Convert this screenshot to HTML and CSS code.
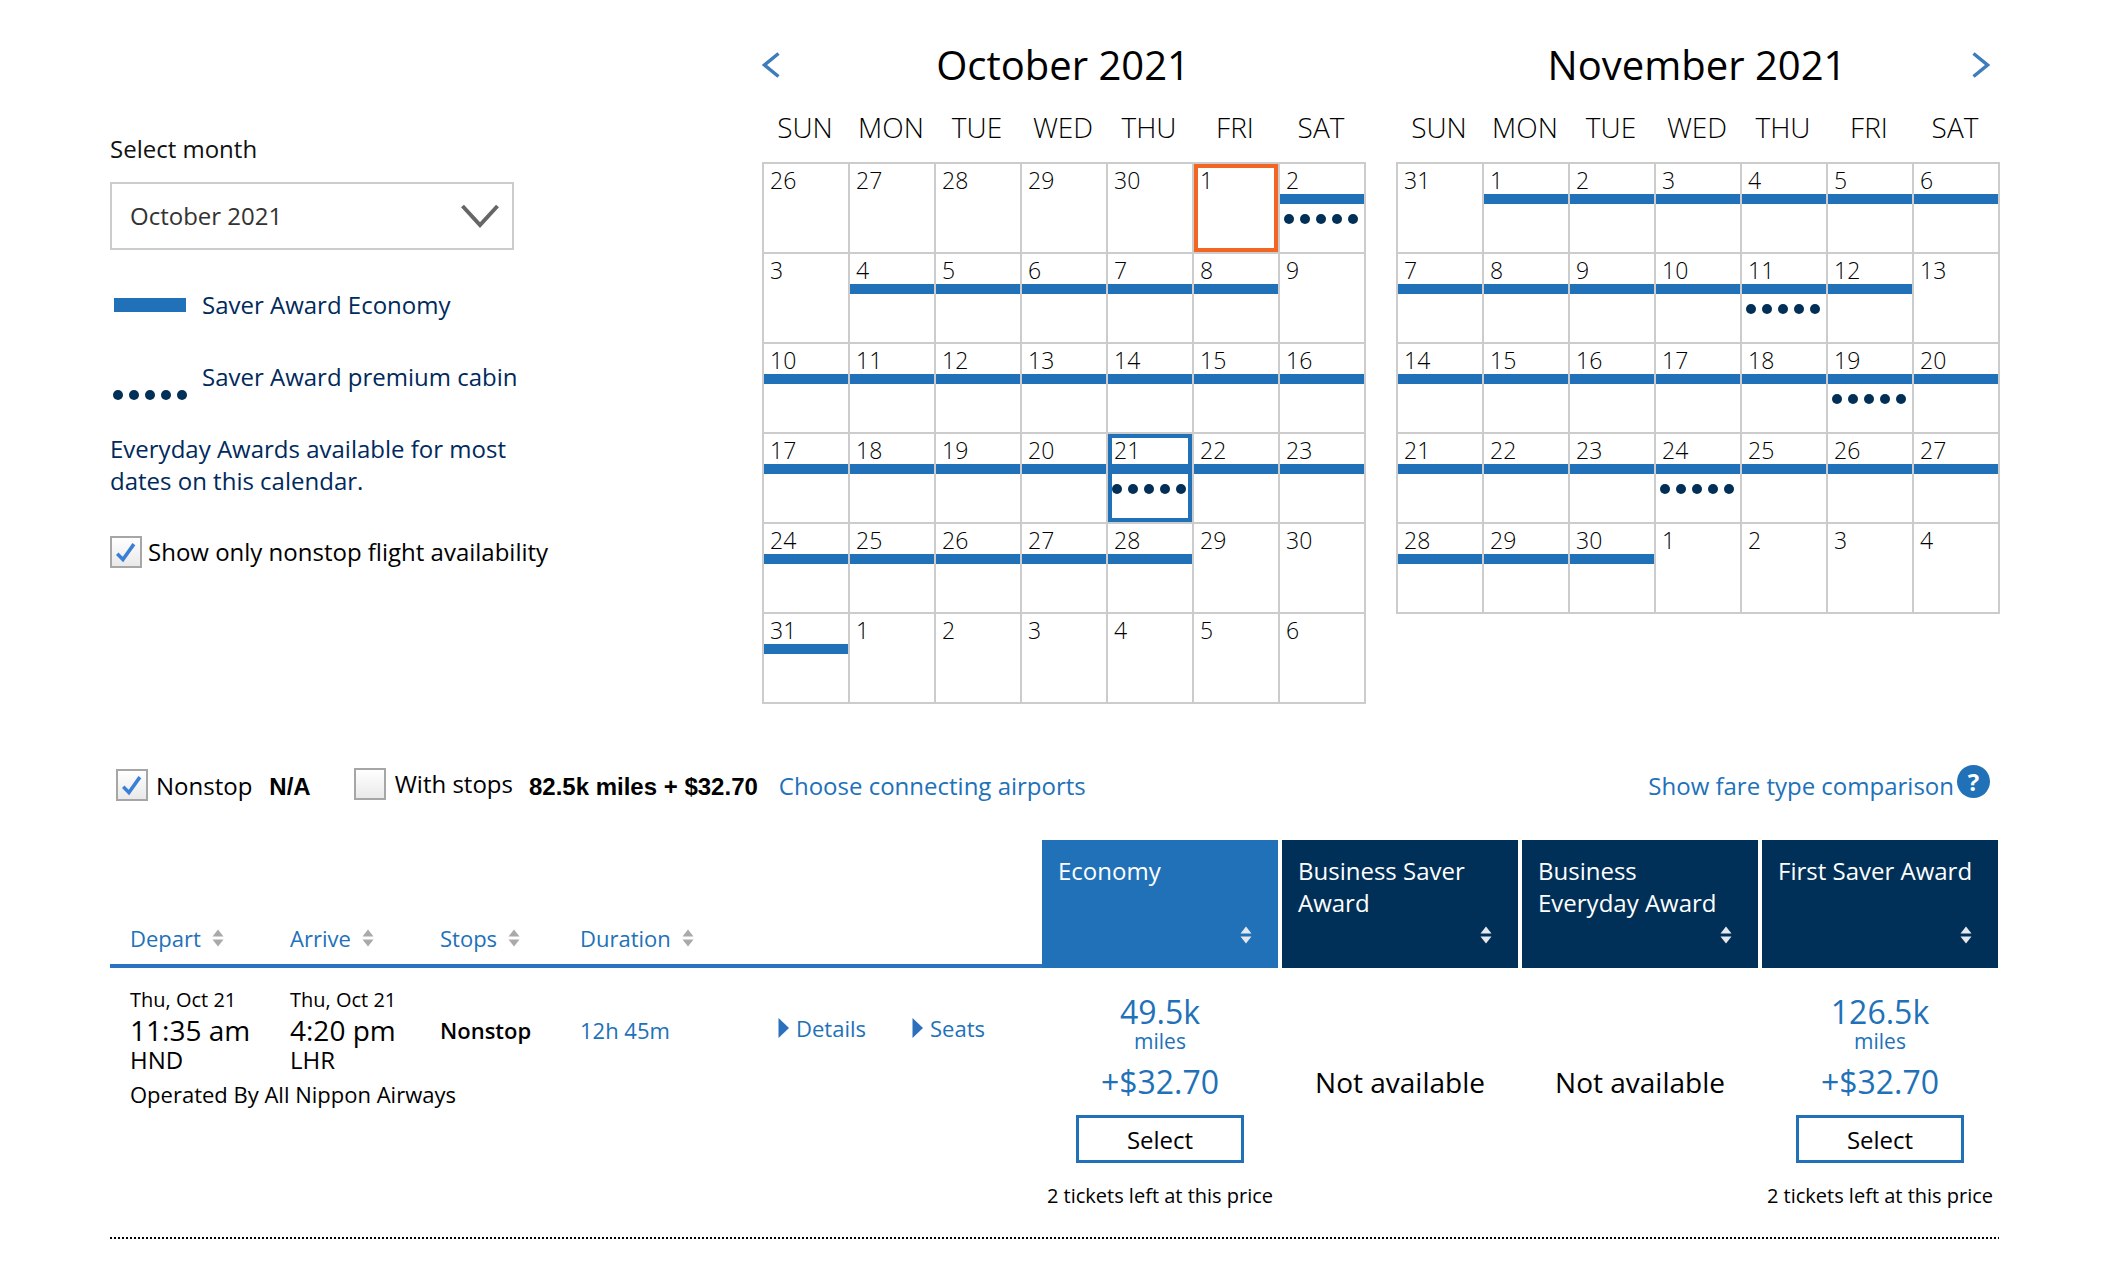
FILE: index.html
```html
<!DOCTYPE html>
<html lang="en">
<head>
<meta charset="utf-8">
<title>Award calendar</title>
<link rel="stylesheet" href="styles.css">
</head>
<body>
<svg class="defs" width="0" height="0" aria-hidden="true">
  <symbol id="sort" viewBox="0 0 12 18"><path d="M6 0.5 L11.5 7.5 H0.5 Z M0.5 10.5 H11.5 L6 17.5 Z" fill="currentColor"/></symbol>
  <symbol id="check" viewBox="0 0 32 32"><path d="M6 18 L12.5 24.5 L25 7" fill="none" stroke="#3a7fd5" stroke-width="4"/></symbol>
  <symbol id="tri" viewBox="0 0 11 20"><path d="M0.5 0 L11 10 L0.5 20 Z" fill="#2a70bd"/></symbol>
</svg>
<main class="page">
  <section class="top">
    <aside class="side">
      <label class="side-label">Select month</label>
      <div class="select"><span>October 2021</span>
        <svg class="select-arrow" width="38" height="24" viewBox="0 0 38 24"><path d="M1.5 2 L19 21 L36.5 2" fill="none" stroke="#666" stroke-width="4"/></svg>
      </div>
      <div class="legend legend-bar"><span class="legend-swatch"></span><span>Saver Award Economy</span></div>
      <div class="legend legend-prem"><span class="dots legend-dots"><i></i><i></i><i></i><i></i><i></i></span><span>Saver Award premium cabin</span></div>
      <p class="note">Everyday Awards available for most<br>dates on this calendar.</p>
      <div class="check-row"><span class="box"><svg width="28" height="28"><use href="#check"/></svg></span><span>Show only nonstop flight availability</span></div>
    </aside>
    <div class="cals" id="cals">
      <div class="cal">
        <div class="cal-head"><svg class="nav" width="18" height="26" viewBox="0 0 18 26"><path d="M16.5 1.5 L2.5 13 L16.5 24.5" fill="none" stroke="#3d7dbb" stroke-width="3.5"/></svg><h2>October 2021</h2><span class="nav-space"></span></div>
        <div class="weekdays"><span>SUN</span><span>MON</span><span>TUE</span><span>WED</span><span>THU</span><span>FRI</span><span>SAT</span></div>
        <div class="grid">
          <div class="day"><div class="num">26</div></div><div class="day"><div class="num">27</div></div><div class="day"><div class="num">28</div></div><div class="day"><div class="num">29</div></div><div class="day"><div class="num">30</div></div><div class="day today"><div class="num">1</div></div><div class="day"><div class="num">2</div><div class="bar"></div><div class="dots"><i></i><i></i><i></i><i></i><i></i></div></div>
          <div class="day"><div class="num">3</div></div><div class="day"><div class="num">4</div><div class="bar"></div></div><div class="day"><div class="num">5</div><div class="bar"></div></div><div class="day"><div class="num">6</div><div class="bar"></div></div><div class="day"><div class="num">7</div><div class="bar"></div></div><div class="day"><div class="num">8</div><div class="bar"></div></div><div class="day"><div class="num">9</div></div>
          <div class="day"><div class="num">10</div><div class="bar"></div></div><div class="day"><div class="num">11</div><div class="bar"></div></div><div class="day"><div class="num">12</div><div class="bar"></div></div><div class="day"><div class="num">13</div><div class="bar"></div></div><div class="day"><div class="num">14</div><div class="bar"></div></div><div class="day"><div class="num">15</div><div class="bar"></div></div><div class="day"><div class="num">16</div><div class="bar"></div></div>
          <div class="day"><div class="num">17</div><div class="bar"></div></div><div class="day"><div class="num">18</div><div class="bar"></div></div><div class="day"><div class="num">19</div><div class="bar"></div></div><div class="day"><div class="num">20</div><div class="bar"></div></div><div class="day selected"><div class="num">21</div><div class="bar"></div><div class="dots"><i></i><i></i><i></i><i></i><i></i></div></div><div class="day"><div class="num">22</div><div class="bar"></div></div><div class="day"><div class="num">23</div><div class="bar"></div></div>
          <div class="day"><div class="num">24</div><div class="bar"></div></div><div class="day"><div class="num">25</div><div class="bar"></div></div><div class="day"><div class="num">26</div><div class="bar"></div></div><div class="day"><div class="num">27</div><div class="bar"></div></div><div class="day"><div class="num">28</div><div class="bar"></div></div><div class="day"><div class="num">29</div></div><div class="day"><div class="num">30</div></div>
          <div class="day"><div class="num">31</div><div class="bar"></div></div><div class="day"><div class="num">1</div></div><div class="day"><div class="num">2</div></div><div class="day"><div class="num">3</div></div><div class="day"><div class="num">4</div></div><div class="day"><div class="num">5</div></div><div class="day"><div class="num">6</div></div>
        </div>
      </div>
      <div class="cal">
        <div class="cal-head"><span class="nav-space"></span><h2>November 2021</h2><svg class="nav nav-next" width="18" height="26" viewBox="0 0 18 26"><path d="M1.5 1.5 L15.5 13 L1.5 24.5" fill="none" stroke="#3d7dbb" stroke-width="3.5"/></svg></div>
        <div class="weekdays"><span>SUN</span><span>MON</span><span>TUE</span><span>WED</span><span>THU</span><span>FRI</span><span>SAT</span></div>
        <div class="grid">
          <div class="day"><div class="num">31</div></div><div class="day"><div class="num">1</div><div class="bar"></div></div><div class="day"><div class="num">2</div><div class="bar"></div></div><div class="day"><div class="num">3</div><div class="bar"></div></div><div class="day"><div class="num">4</div><div class="bar"></div></div><div class="day"><div class="num">5</div><div class="bar"></div></div><div class="day"><div class="num">6</div><div class="bar"></div></div>
          <div class="day"><div class="num">7</div><div class="bar"></div></div><div class="day"><div class="num">8</div><div class="bar"></div></div><div class="day"><div class="num">9</div><div class="bar"></div></div><div class="day"><div class="num">10</div><div class="bar"></div></div><div class="day"><div class="num">11</div><div class="bar"></div><div class="dots"><i></i><i></i><i></i><i></i><i></i></div></div><div class="day"><div class="num">12</div><div class="bar"></div></div><div class="day"><div class="num">13</div></div>
          <div class="day"><div class="num">14</div><div class="bar"></div></div><div class="day"><div class="num">15</div><div class="bar"></div></div><div class="day"><div class="num">16</div><div class="bar"></div></div><div class="day"><div class="num">17</div><div class="bar"></div></div><div class="day"><div class="num">18</div><div class="bar"></div></div><div class="day"><div class="num">19</div><div class="bar"></div><div class="dots"><i></i><i></i><i></i><i></i><i></i></div></div><div class="day"><div class="num">20</div><div class="bar"></div></div>
          <div class="day"><div class="num">21</div><div class="bar"></div></div><div class="day"><div class="num">22</div><div class="bar"></div></div><div class="day"><div class="num">23</div><div class="bar"></div></div><div class="day"><div class="num">24</div><div class="bar"></div><div class="dots"><i></i><i></i><i></i><i></i><i></i></div></div><div class="day"><div class="num">25</div><div class="bar"></div></div><div class="day"><div class="num">26</div><div class="bar"></div></div><div class="day"><div class="num">27</div><div class="bar"></div></div>
          <div class="day"><div class="num">28</div><div class="bar"></div></div><div class="day"><div class="num">29</div><div class="bar"></div></div><div class="day"><div class="num">30</div><div class="bar"></div></div><div class="day"><div class="num">1</div></div><div class="day"><div class="num">2</div></div><div class="day"><div class="num">3</div></div><div class="day"><div class="num">4</div></div>
        </div>
      </div>
    </div>
  </section>

  <section class="filters">
    <div class="filter-nonstop"><span class="box"><svg width="28" height="28"><use href="#check"/></svg></span><span class="filter-text">Nonstop</span><b class="arial na">N/A</b></div>
    <div class="filter-stops"><span class="box box-empty"></span><span class="filter-text stops-text">With stops</span></div>
    <b class="arial price-sum">82.5k miles + $32.70</b>
    <a class="link connect">Choose connecting airports</a>
    <a class="link compare">Show fare type comparison</a>
    <span class="help">?</span>
  </section>

  <section class="thead">
    <div class="sorts">
      <span class="sort-label s1">Depart <svg class="sort"><use href="#sort"/></svg></span>
      <span class="sort-label s2">Arrive <svg class="sort"><use href="#sort"/></svg></span>
      <span class="sort-label s3">Stops <svg class="sort"><use href="#sort"/></svg></span>
      <span class="sort-label s4">Duration <svg class="sort"><use href="#sort"/></svg></span>
    </div>
    <div class="fare-head eco">Economy<svg class="sort"><use href="#sort"/></svg></div>
    <div class="fare-head">Business Saver Award<svg class="sort"><use href="#sort"/></svg></div>
    <div class="fare-head">Business<br>Everyday Award<svg class="sort"><use href="#sort"/></svg></div>
    <div class="fare-head">First Saver Award<svg class="sort"><use href="#sort"/></svg></div>
  </section>

  <section class="flight">
    <div class="info">
      <div class="leg leg-depart"><div class="date">Thu, Oct 21</div><div class="time">11:35 am</div><div class="code">HND</div></div>
      <div class="leg leg-arrive"><div class="date">Thu, Oct 21</div><div class="time">4:20 pm</div><div class="code">LHR</div></div>
      <div class="stops">Nonstop</div>
      <div class="duration">12h 45m</div>
      <a class="toggle toggle-details"><svg width="11" height="20"><use href="#tri"/></svg>Details</a>
      <a class="toggle"><svg width="11" height="20"><use href="#tri"/></svg>Seats</a>
      <div class="operated">Operated By All Nippon Airways</div>
    </div>
    <div class="fare">
      <div class="miles">49.5k</div><div class="miles-unit">miles</div><div class="tax">+$32.70</div>
      <button class="select-btn">Select</button><div class="left-note">2 tickets left at this price</div>
    </div>
    <div class="fare"><div class="na-fare">Not available</div></div>
    <div class="fare"><div class="na-fare">Not available</div></div>
    <div class="fare">
      <div class="miles">126.5k</div><div class="miles-unit">miles</div><div class="tax">+$32.70</div>
      <button class="select-btn">Select</button><div class="left-note">2 tickets left at this price</div>
    </div>
  </section>
  <hr class="dotted">
</main>
</body>
</html>
```
FILE: styles.css
```css
* { box-sizing: border-box; }
html, body { margin: 0; padding: 0; background: #fff; }
body { font-family: "Open Sans", "Liberation Sans", sans-serif; color: #000; height: 1268px; overflow: hidden; }
.defs { position: absolute; }
.page { width: 2112px; padding: 0 112px 0 110px; }

/* top */
.top { display: flex; height: 750px; }
.side { width: 652px; padding-top: 133px; font-size: 24px; }
.side-label { display: block; line-height: 32px; height: 49px; color: #111; }
.select { width: 404px; height: 68px; border: 2px solid #ccc; display: flex; align-items: center; justify-content: space-between; padding: 0 13px 2px 18px; color: #333; }
.select-arrow { margin-top: 2px; }
.legend { color: #002a5c; display: flex; }
.legend-bar { margin-top: 38px; height: 34px; line-height: 34px; align-items: center; padding-left: 4px; gap: 16px; }
.legend-swatch { width: 72px; height: 14px; background: #2171b9; }
.legend-prem { margin-top: 38px; height: 34px; line-height: 34px; padding-left: 3px; gap: 14px; }
.legend .legend-dots { margin-top: 30px; padding-left: 0; width: 75px; flex: none; }
.note { margin: 39px 0 0; line-height: 32px; color: #002a5c; }
.check-row { display: flex; align-items: center; gap: 6px; margin-top: 39px; line-height: 32px; }
.box { width: 32px; height: 32px; flex: none; border: 2px solid #a6a6a6; background: linear-gradient(#fff, #e9e9e9); display: block; }
.box svg { display: block; filter: blur(0.4px); }

/* calendars */
.cals { display: flex; gap: 30px; }
.cal { width: 604px; }
.cal-head { display: grid; grid-template-columns: 24px 1fr 24px; align-items: center; height: 98px; padding-top: 32px; }
.cal-head h2 { margin: 0; font-size: 40px; font-weight: 400; text-align: center; line-height: 66px; padding-right: 2px; white-space: nowrap; }
.nav { filter: blur(0.5px); }
.nav-next { margin-left: -4px; }
.weekdays { display: grid; grid-template-columns: repeat(7, 86px); font-size: 28px; font-weight: 300; text-align: center; height: 64px; line-height: 59px; }
.grid { display: grid; grid-template-columns: repeat(7, 86px); grid-auto-rows: 90px; border-left: 2px solid #ccc; border-top: 2px solid #ccc; }
.day { border-right: 2px solid #ccc; border-bottom: 2px solid #ccc; }
.num { height: 30px; padding-left: 6px; font-size: 23px; line-height: 33px; font-weight: 300; color: #000; }
.bar { height: 10px; background: #2171b9; }
.dots { display: flex; gap: 6px; padding-left: 4px; margin-top: 10px; }
.dots i { width: 10px; height: 10px; border-radius: 50%; background: #003057; filter: blur(0.7px); }
.today { box-shadow: inset 0 0 0 4px #f26522; }
.selected { box-shadow: inset 0 0 0 4px #2171b9; }

/* filters */
.filters { display: flex; align-items: center; height: 70px; font-size: 24px; margin-bottom: 20px; padding-left: 6px; }
.filter-nonstop { display: flex; align-items: center; }
.filter-text { margin-left: 8px; }
.stops-text { margin-left: 9px; }
.arial { font-family: "Liberation Sans", Arial, sans-serif; font-weight: 700; }
.na { margin-left: 17px; margin-top: 4px; }
.filter-stops { display: flex; align-items: center; margin-left: 43px; margin-top: -3px; }
.price-sum { margin-left: 16px; margin-top: 4px; }
.link { color: #2171b9; }
.connect { margin-left: 21px; }
.compare { margin-left: auto; }
.help { width: 33px; height: 33px; border-radius: 50%; background: #2171b9; color: #fff; font-weight: 700; font-size: 24px; line-height: 33px; text-align: center; margin: -8px 10px 0 3px; }

/* table head */
.thead { display: flex; gap: 4px; height: 128px; }
.sorts { width: 932px; margin-right: -4px; border-bottom: 4px solid #2b73c2; display: flex; align-items: flex-end; font-size: 22px; color: #2171b9; padding-left: 20px; padding-bottom: 11px; }
.sort-label { display: flex; align-items: center; gap: 11px; line-height: 30px; }
.s1 { width: 160px; } .s2 { width: 150px; } .s3 { width: 140px; }
.sorts .sort { color: #aaa; filter: blur(0.4px); }
.sort { width: 12px; height: 18px; flex: none; }
.fare-head { position: relative; width: 236px; background: #003057; color: #fff; font-size: 24px; line-height: 32px; padding: 15px 16px 0; }
.fare-head.eco { background: #2171b9; }
.fare-head .sort { position: absolute; right: 26px; bottom: 24px; color: #e4e8ee; filter: blur(0.4px); }

/* flight row */
.flight { display: flex; gap: 4px; height: 269px; }
.info { width: 928px; display: grid; grid-template-columns: 160px 150px 140px 198px 134px 1fr; grid-template-rows: 94px auto; padding: 18px 0 0 20px; }
.date { font-size: 20px; line-height: 28px; }
.time { font-size: 28px; line-height: 32px; }
.code { font-size: 24px; line-height: 20px; margin-top: 4px; }
.stops { font-size: 22px; font-weight: 600; padding-top: 25px; line-height: 38px; }
.duration { font-size: 22px; color: #2171b9; padding-top: 25px; line-height: 38px; }
.toggle { font-size: 22px; color: #2171b9; display: flex; align-items: flex-start; gap: 7px; padding-top: 23px; line-height: 38px; }
.toggle svg { margin-top: 9px; filter: blur(0.4px); }
.operated { grid-column: 1 / -1; font-size: 22px; line-height: 28px; }
.fare { width: 236px; display: flex; flex-direction: column; align-items: center; padding-top: 25px; white-space: nowrap; }
.miles { font-size: 32px; line-height: 38px; color: #2171b9; }
.miles-unit { font-size: 21px; line-height: 21px; color: #2171b9; }
.tax { font-size: 32px; line-height: 44px; margin-top: 8px; color: #2171b9; }
.select-btn { width: 168px; height: 48px; margin-top: 11px; background: #fff; border: 3px solid #2171b9; border-radius: 0; font: 24px "Open Sans", sans-serif; color: #000; padding: 0; }
.left-note { font-size: 20px; line-height: 28px; margin-top: 19px; }
.na-fare { font-size: 28px; line-height: 40px; padding-top: 69px; }
.dotted { border: 0; width: 1889px; height: 2px; margin: 0; background: repeating-linear-gradient(90deg, #000 0 2px, transparent 2px 4px); }
```
